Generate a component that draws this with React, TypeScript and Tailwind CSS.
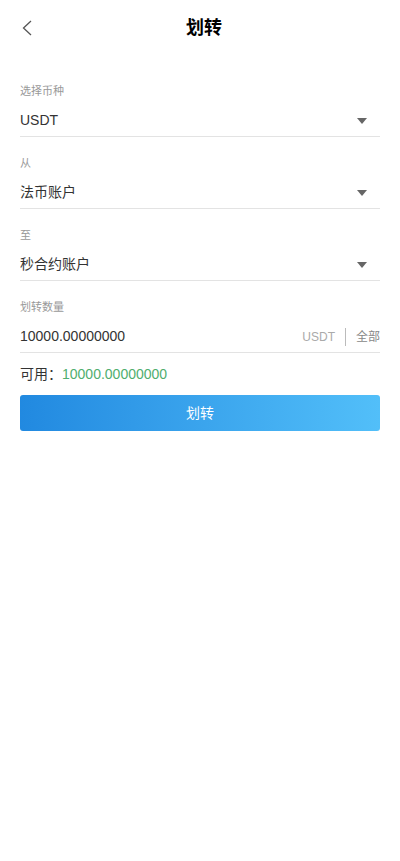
import React from 'react';

const font = { fontFamily: '"Liberation Sans", "Noto Sans CJK SC", sans-serif' };

const Caret: React.FC = () => (
  <span className="w-0 h-0 border-l-[5px] border-r-[5px] border-t-[6px] border-l-transparent border-r-transparent border-t-[#666] mr-[13px]" />
);

const SelectField: React.FC<{ label: string; value: string }> = ({ label, value }) => (
  <div className="pt-[18px]">
    <div className="text-[11px] leading-[16px] text-[#999]">{label}</div>
    <div className="flex items-center justify-between h-[38px] pt-[6px] border-b border-[#e3e3e3]">
      <span className="text-[14px] text-[#333]">{value}</span>
      <Caret />
    </div>
  </div>
);

const App: React.FC = () => {
  return (
    <div className="w-[400px] min-h-[861px] bg-white" style={font}>
      <header className="relative h-[56px] flex items-center justify-center">
        <button className="absolute left-[22px] top-[20px] w-[12px] h-[16px] flex items-center">
          <svg width="10" height="16" viewBox="0 0 10 16" fill="none" stroke="#555" strokeWidth="1.3">
            <path d="M9 1 L1.5 8 L9 15" />
          </svg>
        </button>
        <h1 className="pl-[8px] text-[18px] font-bold text-black">划转</h1>
      </header>

      <div className="px-[20px] pt-[9px]">
        <SelectField label="选择币种" value="USDT" />
        <SelectField label="从" value="法币账户" />
        <SelectField label="至" value="秒合约账户" />

        <div className="pt-[18px]">
          <div className="text-[11px] leading-[16px] text-[#999]">划转数量</div>
          <div className="flex items-center justify-between h-[38px] pt-[6px] border-b border-[#e3e3e3]">
            <span className="text-[14px] text-[#333]">10000.00000000</span>
            <div className="flex items-center">
              <span className="text-[12px] text-[#aaa]">USDT</span>
              <span className="w-px h-[18px] bg-[#bbb] mx-[10px]" />
              <span className="text-[12px] text-[#888]">全部</span>
            </div>
          </div>
        </div>

        <div className="mt-[11px] text-[14px] leading-[20px]">
          <span className="text-[#333]">可用：</span>
          <span className="text-[#4fae6e]">10000.00000000</span>
        </div>

        <button className="mt-[11px] w-full h-[36px] rounded-[3px] bg-gradient-to-r from-[#2189e0] to-[#52bff9] text-white text-[14px]">
          划转
        </button>
      </div>
    </div>
  );
};

export default App;
